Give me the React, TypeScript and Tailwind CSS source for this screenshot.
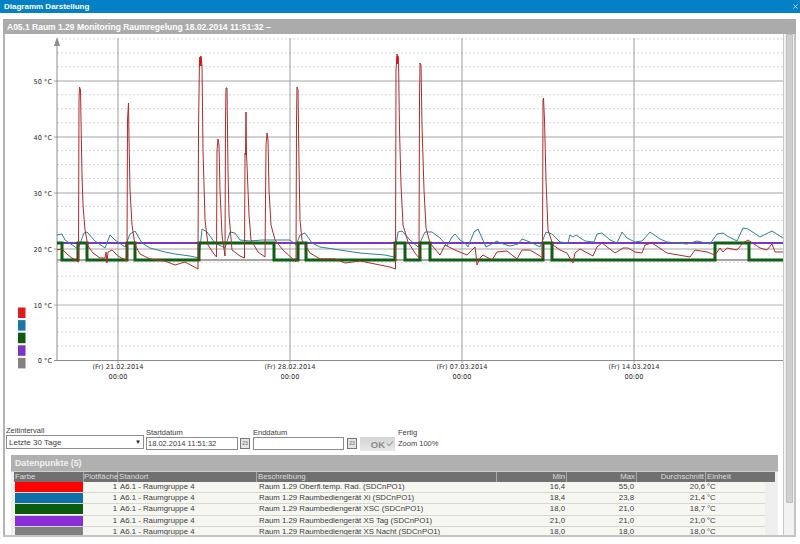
import { Check, X } from "lucide-react";

const red =
  "57,250 62,249 68,255 72,258 77,261 78.5,262 79,100 79.5,87 80.5,90 81,120 82,175 83,205 85,230 88,246 93,253 100,258 105,258 106,252 107,263 108,252 112,250 118,256 125,260 127,261 127.5,120 128.5,103 129,140 130,190 132,225 135,245 140,254 150,259 165,261 175,265 185,262 198,269 198.5,130 199.5,58 201,56 202,66 203,150 205,220 208,245 214,254 216.5,257 217,150 218,139 219,145 220,190 222,235 225,256 225.5,120 226,88 227,88 227.5,130 228,170 229,215 232,250 240,256 244.5,258 245,153 245.5,155 246,112 246.5,155 247,165 249,215 251,240 258,252 265,257 266,145 267,133 268,140 269,190 271,225 275,240 283,250 296,262 296.5,120 297,87 298,90 299,165 300,220 302,240 310,253 320,259 335,259 345,263 360,261 375,264 390,267 395.5,269 396,70 397,54 398.5,58 399.5,130 401,185 403,225 408,242 415,253 419,258 419.5,100 420,63 421,65 422,125 424,190 426,228 430,243 440,255 445,245 455,250 467,255 472,250 475,247 476,255 477,265 480,258 483,255 492,260 497,252 507,251 517,259 522,250 530,250 540,256 542.5,258 543,100 543.5,98 544.5,120 546,180 548,230 553,245 560,250 567,253 572,262 573,263 575,253 580,249 593,256 597,247 602,243 615,253 623,248 628,248 635,252 642,253 645,245 652,243 667,253 690,257 695,250 707,252 715,255 720,248 723,252 727,248 737,250 743,243 748,240 760,248 767,250 772,244 775,252 783,252";

const blue =
  "57,235 62,234 65,240 78,249 84,233 87,232 95,241 105,248 110,235 115,240 125,247 130,234 135,231 142,243 150,248 165,252 175,254 190,256 199,258 202,229 207,232 215,243 225,248 230,232 235,233 240,240 250,241 262,240 275,240 290,240 296,245 300,235 305,233 312,243 320,247 340,250 360,253 385,255 394,257 398,232 402,231 410,240 418,247 425,232 432,232 440,238 447,246 452,237 455,234 460,240 465,243 468,247 474,232 478,229 482,238 486,247 490,245 497,241 500,243 510,246 518,244 522,239 530,242 540,247 546,232 552,234 560,242 568,243 570,235 573,237 576,235 585,241 594,242 597,234 602,233 610,240 617,243 622,232 627,238 635,242 642,241 650,232 660,239 667,242 687,244 697,241 710,244 717,234 723,233 727,236 737,241 743,228 748,229 760,237 772,231 783,238";

const green =
  "57,243 62,243 62,260 78,260 78,243 87,243 87,260 127,260 127,243 135,243 135,260 199,260 199,243 274,243 274,260 298,260 298,243 306,243 306,260 395,260 395,243 405,243 405,260 420,260 420,243 430,243 430,260 543,260 543,243 552,243 552,260 715,260 715,243 749,243 749,260 784,260";

const dotted = Array.from({ length: 24 }, (_, k) => k).filter((k) => k % 4 !== 0);
const solid = [
  { y: 360, label: "0 °C" },
  { y: 305, label: "10 °C" },
  { y: 249, label: "20 °C" },
  { y: 193, label: "30 °C" },
  { y: 137, label: "40 °C" },
  { y: 81, label: "50 °C" },
];
const dates = [
  { x: 118, label: "(Fr) 21.02.2014" },
  { x: 290, label: "(Fr) 28.02.2014" },
  { x: 462, label: "(Fr) 07.03.2014" },
  { x: 634, label: "(Fr) 14.03.2014" },
];
const legend = ["#dd1c1c", "#1a78a8", "#0d5a12", "#7a35c8", "#828282"];

const rows = [
  { color: "bg-[#ff0000]", desc: "Raum 1.29 Oberfl.temp. Rad. (SDCnPO1)", min: "16,4", max: "55,0", avg: "20,6" },
  { color: "bg-[#0f70a8]", desc: "Raum 1.29 Raumbediengerät Xi (SDCnPO1)", min: "18,4", max: "23,8", avg: "21,4" },
  { color: "bg-[#0a5c0c]", desc: "Raum 1.29 Raumbediengerät XSC (SDCnPO1)", min: "18,0", max: "21,0", avg: "18,7" },
  { color: "bg-[#8a2fd6]", desc: "Raum 1.29 Raumbediengerät XS Tag (SDCnPO1)", min: "21,0", max: "21,0", avg: "21,0" },
  { color: "bg-[#808080]", desc: "Raum 1.29 Raumbediengerät XS Nacht (SDCnPO1)", min: "18,0", max: "18,0", avg: "18,0" },
];

function Chart() {
  return (
    <svg viewBox="5 34 779 390" className="block w-[779px] h-[390px]">
      {dotted.map((k) => (
        <line key={k} x1={57} x2={784} y1={360 - k * 13.96} y2={360 - k * 13.96} stroke="#d8d8d8" strokeWidth={1} strokeDasharray="2 2" />
      ))}
      {solid.slice(1).map((s) => (
        <line key={s.y} x1={54} x2={784} y1={s.y} y2={s.y} stroke={s.y === 305 ? "#cccccc" : "#a6a6a6"} strokeWidth={s.y === 305 ? 1.6 : 1} />
      ))}
      {dates.map((d) => (
        <line key={d.x} x1={d.x} x2={d.x} y1={38} y2={363} stroke="#a0a0a0" strokeWidth={1} />
      ))}
      <line x1={54} x2={784} y1={360.5} y2={360.5} stroke="#8c8c8c" />
      <line x1={57} x2={57} y1={44} y2={360} stroke="#8c8c8c" />
      <polygon points="57,37 54,46 60,46" fill="#8c8c8c" />

      <line x1={57} x2={784} y1={260} y2={260} stroke="#8a8a8a" strokeWidth={1.5} />
      <line x1={57} x2={784} y1={243} y2={243} stroke="#7a35c8" strokeWidth={2} />
      <polyline points={blue} fill="none" stroke="#2f7f9f" strokeWidth={1} />
      <polyline points={green} fill="none" stroke="#0d5f14" strokeWidth={3} />
      <polyline points={red} fill="none" stroke="#ad2c2c" strokeWidth={1} />
      <line x1={200.5} x2={200.5} y1={57} y2={66} stroke="#d81818" strokeWidth={2.5} />
      <line x1={397.5} x2={397.5} y1={56} y2={64} stroke="#d81818" strokeWidth={2} />

      <g fontFamily="'DejaVu Sans', sans-serif" fontSize={6.6} fill="#2a2a2a">
        {solid.map((s) => (
          <text key={s.y} x={52} y={s.y + 2.5} textAnchor="end">
            {s.label}
          </text>
        ))}
        {dates.map((d) => (
          <g key={d.x} textAnchor="middle">
            <text x={d.x} y={369}>{d.label}</text>
            <text x={d.x} y={379}>00:00</text>
          </g>
        ))}
      </g>

      {legend.map((c, i) => (
        <rect key={c} x={18} y={307.5 + i * 12.6} width={7.5} height={10.5} fill={c} />
      ))}
    </svg>
  );
}

function CalendarButton() {
  return (
    <div className="w-[10px] h-[11px] border border-[#777] bg-[#e4e4e4] text-[#666] text-[5px] leading-[9px] text-center">23</div>
  );
}

export default function App() {
  return (
    <div className="w-[800px] h-[544px] overflow-hidden bg-white flex flex-col font-['Liberation_Sans',Arial,sans-serif] text-[7.5px] leading-[11px] text-[#3c3c3c]">
      <div className="h-[13px] shrink-0 bg-[#0480c6] flex items-center justify-between pl-[4px] pr-[1px]">
        <span className="text-white text-[8px] font-bold">Diagramm Darstellung</span>
        <X className="w-[7px] h-[7px] text-[#cfe6f4]" strokeWidth={3} />
      </div>

      <div className="mt-[6px] ml-[3px] w-[793px] h-[518px] border-b-2 border-[#c4c4c4] flex flex-col overflow-hidden">
        <div className="h-[15px] shrink-0 bg-[#ababab] pl-[4px] text-white text-[8.5px] font-bold leading-[16px]">
          A05.1 Raum 1.29 Monitoring Raumregelung 18.02.2014 11:51:32 –
        </div>
        <div className="flex flex-1 min-h-0">
          <div className="w-[781px] border-l-2 border-[#b4b4b4] border-r border-r-[#c8c8c8] overflow-hidden">
            <Chart />

            <div className="h-[31px] flex pl-[1px] pt-[2px]">
              <div className="w-[140px]">
                <div className="h-[9px] leading-[9px]">Zeitintervall</div>
                <div className="w-[138px] h-[14px] border border-[#8c8c8c] flex items-center justify-between pl-[2px] pr-[2px] text-[8px]">
                  <span>Letzte 30 Tage</span>
                  <span className="text-[6px] text-[#222]">▼</span>
                </div>
              </div>
              <div className="w-[107px] pt-[2px]">
                <div className="h-[9px] leading-[9px]">Startdatum</div>
                <div className="flex items-center gap-[2px]">
                  <div className="w-[92px] h-[13px] border border-[#8c8c8c] pl-[1px] leading-[12px]">18.02.2014 11:51:32</div>
                  <CalendarButton />
                </div>
              </div>
              <div className="w-[107px] pt-[2px]">
                <div className="h-[9px] leading-[9px]">Enddatum</div>
                <div className="flex items-center gap-[3px]">
                  <div className="w-[91px] h-[13px] border border-[#8c8c8c]" />
                  <CalendarButton />
                </div>
              </div>
              <div className="w-[38px] pt-[11px]">
                <div className="w-[35px] h-[14px] bg-gradient-to-b from-[#d4d4d4] to-[#e8e8e8] flex items-center justify-end gap-[1px] pr-[1px] text-[#8a8a8a] text-[9.5px] font-bold">
                  OK
                  <Check className="w-[8px] h-[8px] text-[#aaa]" strokeWidth={4} />
                </div>
              </div>
              <div className="pt-[1px]">
                <div className="leading-[11px]">Fertig</div>
                <div className="leading-[11px]">Zoom 100%</div>
              </div>
            </div>

            <div className="ml-[6px] w-[767px] h-[100px] bg-[#eeeeee] overflow-hidden text-[7.8px]">
              <div className="h-[16px] bg-[#b0b0b0] pl-[4px] text-[#f0f0f0] text-[8.8px] font-bold leading-[17px]">Datenpunkte (5)</div>
              <div className="px-[3px] bg-[#efefef] border-t border-[#d0d0d0]">
                <div className="h-[10px] bg-[#707070] text-[#dddddd] grid grid-cols-[70px_34px_139px_240px_70px_70px_69px_69px] leading-[10px] whitespace-nowrap">
                  <div className="pl-[1px] border-r border-[#a8a8a8]">Farbe</div>
                  <div className="text-right border-r border-[#a8a8a8]">Plotfläche</div>
                  <div className="pl-[1px] border-r border-[#a8a8a8]">Standort</div>
                  <div className="pl-[1px] border-r border-[#a8a8a8]">Beschreibung</div>
                  <div className="text-right pr-[1px] border-r border-[#a8a8a8]">Min</div>
                  <div className="text-right pr-[1px] border-r border-[#a8a8a8]">Max</div>
                  <div className="text-right pr-[1px] border-r border-[#a8a8a8]">Durchschnitt</div>
                  <div className="pl-[1px]">Einheit</div>
                </div>
                <div className="w-[751px]">
                  {rows.map((r) => (
                    <div
                      key={r.color}
                      className="h-[11.2px] bg-[#f6f7f1] border-b border-[#d6d8d0] grid grid-cols-[70px_34px_139px_240px_70px_70px_69px_59px] items-center leading-[10px] whitespace-nowrap"
                    >
                      <div className={`h-[10px] mx-[1px] ${r.color}`} />
                      <div className="text-right pr-[1px]">1</div>
                      <div className="pl-[2px]">A6.1 - Raumgruppe 4</div>
                      <div className="pl-[2px]">{r.desc}</div>
                      <div className="text-right pr-[2px]">{r.min}</div>
                      <div className="text-right pr-[3px]">{r.max}</div>
                      <div className="text-right pr-[1px]">{r.avg}</div>
                      <div className="pl-[1px]">°C</div>
                    </div>
                  ))}
                </div>
              </div>
            </div>
          </div>

          <div className="flex-1 bg-[#f2f2f2] border-r-2 border-[#c4c4c4] pl-[2px] pr-[1px]">
            <div className="h-[469px] w-[7px] bg-[#cfcfcf] border border-[#bdbdbd] rounded-b-[1px]" />
          </div>
        </div>
      </div>
    </div>
  );
}
